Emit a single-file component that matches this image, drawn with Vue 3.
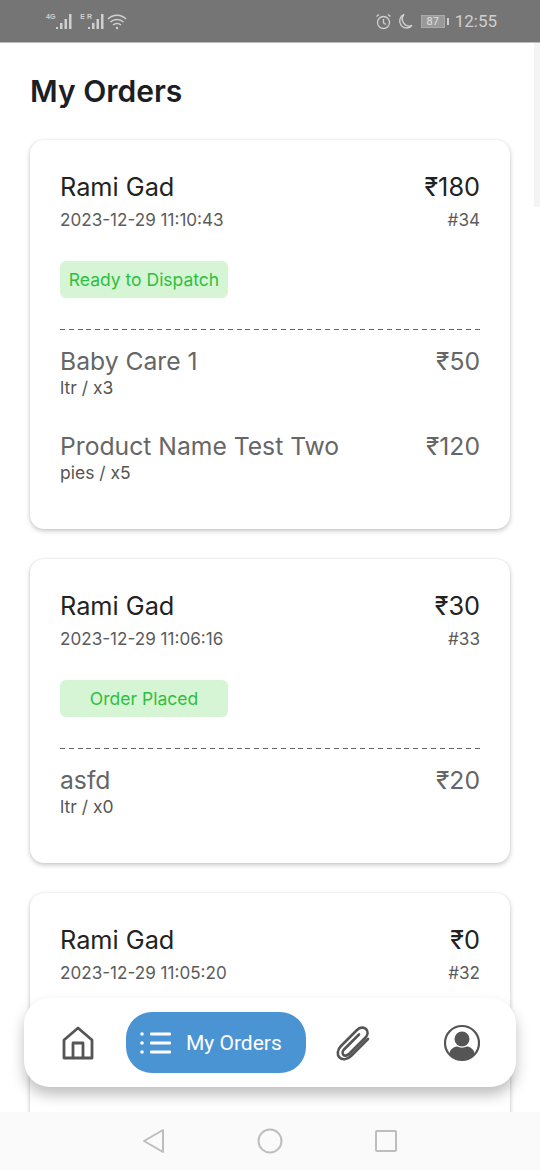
<template>
  <div class="screen">
    <div class="status-bar">
      <div class="status-left">
        <div class="signal">
          <span class="net">4G</span>
          <svg width="17" height="17" viewBox="0 0 17 17"><path d="M1 14h2v2H1zM5 10h2.500v6H5zM9.500 6H12v10H9.500zM14 1h2.500v15H14z" fill="#d0d0d0"/></svg>
        </div>
        <div class="signal second">
          <span class="net">E R</span>
          <svg width="17" height="17" viewBox="0 0 17 17"><path d="M1 14h2v2H1zM5 10h2.500v6H5zM9.500 6H12v10H9.500zM14 1h2.500v15H14z" fill="#d0d0d0"/></svg>
        </div>
        <svg class="wifi" width="20" height="17" viewBox="0 0 20 17" fill="none" stroke="#d0d0d0" stroke-width="1.500"><path d="M1 6c5-5 13-5 18 0M3.500 9c3.500-3.300 9.500-3.300 13 0M6 12c2.200-2 5.800-2 8 0"/><circle cx="10" cy="15" r="1.200" fill="#d0d0d0" stroke="none"/></svg>
      </div>
      <div class="status-right">
        <svg class="alarm" width="17" height="17" viewBox="0 0 17 17" fill="none" stroke="#d0d0d0" stroke-width="1.300"><circle cx="8.500" cy="9.500" r="6"/><path d="M8.500 6v4l2.500 1.500M1.500 3.500 4 1.500M15.500 3.500 13 1.500"/></svg>
        <svg width="15" height="16" viewBox="0 0 15 16" fill="none" stroke="#d0d0d0" stroke-width="1.400"><path d="M6 1.500a7 7 0 0 0 8 11 7 7 0 1 1-8-11z"/></svg>
        <div class="battery"><span>87</span></div>
        <span class="nub"></span>
        <span class="clock">12:55</span>
      </div>
    </div>

    <div class="content">
      <h1 class="page-title">My Orders</h1>

      <div v-for="order in orders" :key="order.id" class="order-card">
        <div class="row">
          <span class="customer">{{ order.customer }}</span>
          <span class="customer">₹{{ order.total }}</span>
        </div>
        <div class="row meta">
          <span>{{ order.date }}</span>
          <span>#{{ order.id }}</span>
        </div>
        <div class="status-pill">{{ order.status }}</div>
        <div class="items">
          <div v-for="item in order.items" :key="item.name" class="item">
            <div class="row">
              <span class="item-name">{{ item.name }}</span>
              <span class="item-name">₹{{ item.price }}</span>
            </div>
            <div class="item-qty">{{ item.qty }}</div>
          </div>
        </div>
      </div>

      <div class="scrollbar"></div>
    </div>

    <div class="bottom-nav">
      <svg class="nav-home" width="32" height="34" viewBox="0 0 32 34" fill="none" stroke="#555" stroke-width="2.800" stroke-linejoin="round"><path d="M2 14 16 2l14 12v18H2zM11 32V17h10v15"/></svg>
      <div class="nav-active">
        <svg width="32" height="24" viewBox="0 0 32 24" fill="#fff"><circle cx="2" cy="3" r="1.800"/><circle cx="2" cy="12" r="1.800"/><circle cx="2" cy="21" r="1.800"/><rect x="10" y="1.500" width="21" height="3" rx="1"/><rect x="10" y="10.500" width="21" height="3" rx="1"/><rect x="10" y="19.500" width="21" height="3" rx="1"/></svg>
        <span>My Orders</span>
      </div>
      <svg class="nav-clip" width="34" height="36" viewBox="0 0 34 36" fill="none" stroke="#555" stroke-width="2.600" stroke-linecap="round"><path d="M32 14 15 31c-4 4-9 4-11.500 1.500S1 25 5 21L21 5c3-3 7-3 9-1 2.500 2.500 2 6-1 9L13 29c-2 2-4.500 2-5.500 1-1.500-1.500-1-4 .5-5.500L23 9.500"/></svg>
      <svg class="nav-user" width="36" height="38" viewBox="0 0 36 38"><circle cx="18" cy="19" r="17" fill="#fff" stroke="#555" stroke-width="2.200"/><circle cx="18" cy="15" r="7.500" fill="#555"/><path d="M5.500 30c0-5 5-7.500 8-7.500 2 1.500 7 1.500 9 0 3 0 8 2.500 8 7.500a17 17 0 0 1-25 0z" fill="#555"/></svg>
    </div>

    <div class="system-nav">
      <svg width="24" height="26" viewBox="0 0 24 26" fill="none" stroke="#bdbdbd" stroke-width="2" stroke-linejoin="round"><path d="M21 2v22L2 13z"/></svg>
      <svg width="26" height="26" viewBox="0 0 26 26" fill="none" stroke="#bdbdbd" stroke-width="2"><circle cx="13" cy="13" r="11.500"/></svg>
      <svg width="24" height="24" viewBox="0 0 24 24" fill="none" stroke="#bdbdbd" stroke-width="2" stroke-linejoin="round"><rect x="2" y="2" width="20" height="20" rx="1"/></svg>
    </div>
  </div>
</template>

<script setup>
const orders = [
  {
    id: 34, customer: 'Rami Gad', total: 180, date: '2023-12-29 11:10:43', status: 'Ready to Dispatch',
    items: [
      { name: 'Baby Care 1', price: 50, qty: 'ltr / x3' },
      { name: 'Product Name Test Two', price: 120, qty: 'pies / x5' }
    ]
  },
  {
    id: 33, customer: 'Rami Gad', total: 30, date: '2023-12-29 11:06:16', status: 'Order Placed',
    items: [{ name: 'asfd', price: 20, qty: 'ltr / x0' }]
  },
  {
    id: 32, customer: 'Rami Gad', total: 0, date: '2023-12-29 11:05:20', status: 'Order Placed',
    items: []
  }
]
</script>

<style>
html, body { margin: 0; background: #fff; }
</style>

<style scoped>
.screen {
  position: relative; width: 540px; height: 1170px; overflow: hidden; background: #fff;
  font-family: Inter, "Noto Sans", sans-serif;
}

.status-bar {
  height: 43px; background: #757575; display: flex; justify-content: space-between; align-items: center;
  padding: 0 43px 0 46px; box-sizing: border-box; color: #d0d0d0; border-bottom: 1px solid #bbb;
}
.status-left, .status-right { display: flex; align-items: center; }
.signal { display: flex; align-items: flex-start; }
.signal.second { margin-left: 8px; }
.signal.second svg { margin-left: -5px; }
.wifi { margin-left: 3px; }
.net { font-size: 7px; line-height: 8px; font-weight: 700; font-family: "Liberation Sans", sans-serif; }
.status-right svg { margin-right: 5px; }
.status-right .alarm { margin-right: 6px; margin-left: 1px; }
.battery {
  width: 24px; height: 13px; border: 1px solid #aaa; background: #999; box-sizing: border-box;
  display: flex; align-items: center; justify-content: center; margin-left: 3px;
}
.battery span { font-size: 11px; color: #e0e0e0; font-family: Roboto, sans-serif; }
.nub { width: 2px; height: 7px; background: #d0d0d0; margin: 0 6px 0 2px; }
.clock { font-size: 17px; font-family: Roboto, sans-serif; color: #d0d0d0; }

.content { padding: 0 30px; position: relative; height: 1127px; box-sizing: border-box; }
.page-title { margin: 0; padding-top: 29px; font-size: 30px; line-height: 38px; font-weight: 600; color: #1c1e26; height: 97px; box-sizing: border-box; }
.scrollbar { position: absolute; right: 0; top: 0; width: 6px; height: 164px; background: #f4f4f4; }

.order-card {
  background: #fff; border-radius: 14px; padding: 30px 30px 46px; margin-bottom: 30px;
  box-shadow: 0 2px 5px rgba(0,0,0,.22), 0 0 2px rgba(0,0,0,.08);
}
.row { display: flex; justify-content: space-between; align-items: center; }
.customer { font-size: 25.3px; line-height: 34px; color: #222; }
.meta { font-size: 17.1px; line-height: 22px; color: #5c5c5c; margin-top: 5px; }
.status-pill {
  margin-top: 30px; width: 168px; height: 37px; background: #d5f5d5; border-radius: 6px;
  color: #2fbf3f; font-size: 17.5px; line-height: 37px; text-align: center;
}
.items {
  margin-top: 31px; padding-top: 15px;
  background: repeating-linear-gradient(90deg, #666 0 5px, transparent 5px 8.83px) top / 100% 1px no-repeat;
}
.item { margin-bottom: 31px; }
.item:last-child { margin-bottom: 0; }
.item-name { font-size: 24.7px; line-height: 34px; color: #666; }
.item-qty { font-size: 17.5px; line-height: 20px; color: #555; }

.bottom-nav {
  position: absolute; left: 24px; top: 998px; width: 492px; height: 89px; background: #fff; border-radius: 26px;
  box-shadow: 0 8px 14px rgba(0,0,0,.25); display: flex; align-items: center; box-sizing: border-box; padding-left: 38px;
}
.nav-active {
  margin-left: 32px; width: 180px; height: 61px; border-radius: 26px; background: #4a94d4; color: #fff;
  display: flex; align-items: center; padding-left: 14px; box-sizing: border-box; font-family: Roboto, sans-serif; font-size: 21px;
}
.nav-active span { margin-left: 14px; }
.nav-clip { margin-left: 30px; }
.nav-user { margin-left: 74px; }

.system-nav {
  position: absolute; left: 0; right: 0; bottom: 0; height: 58px; background: #fafafa;
  display: flex; align-items: center; justify-content: center; gap: 91px;
}
</style>
